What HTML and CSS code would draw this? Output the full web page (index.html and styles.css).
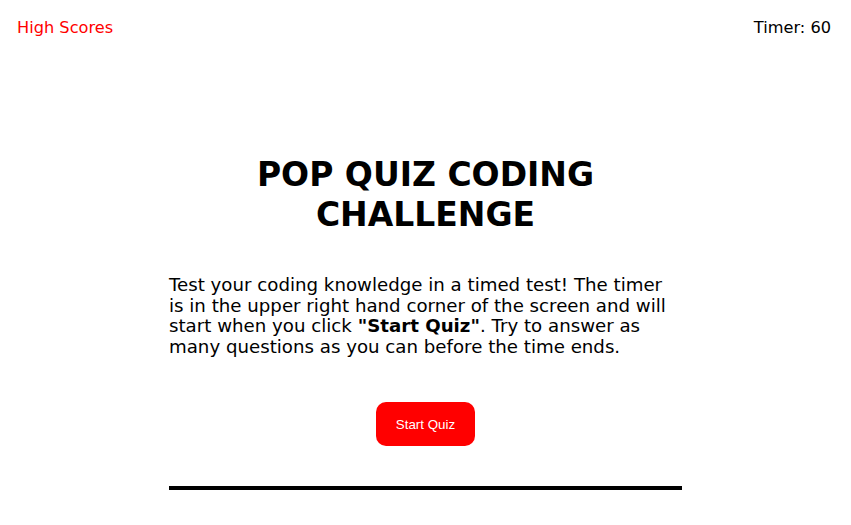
FILE: index.html
```html
<!DOCTYPE html>
<html>
<head>
<meta charset="utf-8">
<link rel="stylesheet" href="styles.css">
</head>
<body>
<header class="topbar">
  <a class="scores-link" href="#">High Scores</a>
  <div class="timer">Timer: <span>60</span></div>
</header>
<main class="quiz">
  <h1 class="title">POP QUIZ CODING CHALLENGE</h1>
  <p class="intro">Test your coding knowledge in a timed test! The timer is in the upper right hand corner of the screen and will start when you click <strong>"Start Quiz"</strong>. Try to answer as many questions as you can before the time ends.</p>
  <div class="actions">
    <button class="start-btn">Start Quiz</button>
  </div>
  <hr class="divider">
</main>
</body>
</html>
```
FILE: styles.css
```css
html, body {
  margin: 0;
  padding: 0;
  background: #fff;
}
body {
  font-family: "DejaVu Sans", Verdana, sans-serif;
  color: #000;
}
.topbar {
  display: flex;
  justify-content: space-between;
  align-items: center;
  padding: 18px 20px 0 17px;
  font-size: 16.2px;
}
.scores-link {
  color: #ff0000;
  text-decoration: none;
}
.quiz {
  width: 513px;
  margin: 0 auto;
  padding-top: 118px;
}
.title {
  font-size: 33px;
  line-height: 40px;
  text-align: center;
  margin: 0 40px 40px;
}
.intro {
  font-size: 18.2px;
  line-height: 20.5px;
  margin: 0;
}
.actions {
  display: flex;
  justify-content: center;
  margin-top: 45px;
}
.start-btn {
  font-family: "Liberation Sans", Arial, sans-serif;
  font-size: 13.33px;
  color: #fff;
  background: #ff0000;
  border: none;
  border-radius: 10px;
  width: 99px;
  height: 44px;
}
.divider {
  border: none;
  height: 4px;
  background: #000;
  margin: 40px 0 0;
}
```
